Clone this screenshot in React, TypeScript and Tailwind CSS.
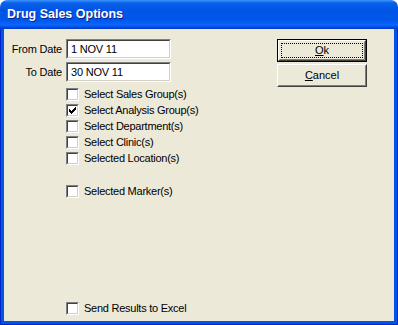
import React from 'react';

const font = { fontFamily: '"Liberation Sans", Arial, sans-serif' };

function CheckBox({ label, checked }: { label: string; checked?: boolean }) {
    return (
        <div className="flex items-center h-[16px]">
            <div className="w-[13px] h-[13px] border border-t-[#808080] border-l-[#808080] border-b-white border-r-white">
                <div className="w-full h-full bg-white border border-t-[#404040] border-l-[#404040] border-b-[#d4d0c8] border-r-[#d4d0c8] flex items-center justify-center">
                    {checked && (
                        <svg width="7" height="7" viewBox="0 0 7 7" shapeRendering="crispEdges">
                            <path d="M0 2h1v3h-1zM1 3h1v3h-1zM2 4h1v3h-1zM3 3h1v3h-1zM4 2h1v3h-1zM5 1h1v3h-1zM6 0h1v3h-1z" fill="#000" />
                        </svg>
                    )}
                </div>
            </div>
            <span className="ml-[5px] text-[11px] tracking-[-0.25px] text-black leading-none">{label}</span>
        </div>
    );
}

function DateField({ label, value }: { label: string; value: string }) {
    return (
        <div className="flex items-center">
            <span className="w-[52px] text-right text-[11px] tracking-[-0.2px] text-black">{label}</span>
            <div className="ml-[4px] w-[105px] h-[20px] border border-t-[#808080] border-l-[#808080] border-b-white border-r-white">
                <div className="w-full h-full bg-white border border-t-[#404040] border-l-[#404040] border-b-[#d4d0c8] border-r-[#d4d0c8] flex items-center pl-[3px] text-[11px] tracking-[-0.2px] text-black">
                    {value}
                </div>
            </div>
        </div>
    );
}

function Button({ children, isDefault }: { children: React.ReactNode; isDefault?: boolean }) {
    return (
        <div className={`w-[90px] h-[23px] ${isDefault ? 'border border-black' : ''}`}>
            <div className="w-full h-full border border-t-white border-l-white border-b-[#404040] border-r-[#404040]">
                <div className="w-full h-full border border-t-[#ece9d8] border-l-[#ece9d8] border-b-[#808080] border-r-[#808080] flex items-center justify-center p-[1px]">
                    <div className={`w-full h-full flex items-center justify-center text-[11px] text-black ${isDefault ? 'border border-dotted border-black' : ''}`}>
                        {children}
                    </div>
                </div>
            </div>
        </div>
    );
}

export default function App() {
    return (
        <div className="w-[398px] h-[325px] bg-white flex flex-col" style={font}>
            {/* Title bar */}
            <div className="h-[29px] rounded-t-[7px] flex items-center pl-[7px] bg-[linear-gradient(to_bottom,#3d95ff_0px,#0a5fea_3px,#0055e5_10px,#0057ea_20px,#0a66ff_25px,#0043d0_28px,#003cc8_29px)]">
                <span className="text-white font-bold text-[12.5px] [text-shadow:1px_1px_0_#0f1f8a]">Drug Sales Options</span>
            </div>

            {/* Window frame + client area */}
            <div className="flex-1 flex bg-[#0055e5] border-l border-r border-b border-[#0026c8] px-[3px] pb-[3px]">
                <div className="flex-1 bg-[#ece9d8] flex">
                    <div className="flex-1 flex flex-col pt-[10px] pl-[6px] pb-[5px]">
                        <DateField label="From Date" value="1 NOV 11" />
                        <div className="mt-[3px]">
                            <DateField label="To Date" value="30 NOV 11" />
                        </div>
                        <div className="flex-1 ml-[56px] mt-[4px] flex flex-col">
                            <CheckBox label="Select Sales Group(s)" />
                            <CheckBox label="Select Analysis Group(s)" checked />
                            <CheckBox label="Select Department(s)" />
                            <CheckBox label="Select Clinic(s)" />
                            <CheckBox label="Selected Location(s)" />
                            <div className="mt-[17px]">
                                <CheckBox label="Selected Marker(s)" />
                            </div>
                            <div className="mt-auto">
                                <CheckBox label="Send Results to Excel" />
                            </div>
                        </div>
                    </div>
                    <div className="flex flex-col gap-[2px] pt-[10px] pr-[27px]">
                        <Button isDefault>
                            <span><span className="underline">O</span>k</span>
                        </Button>
                        <Button>
                            <span><span className="underline">C</span>ancel</span>
                        </Button>
                    </div>
                </div>
            </div>
        </div>
    );
}
